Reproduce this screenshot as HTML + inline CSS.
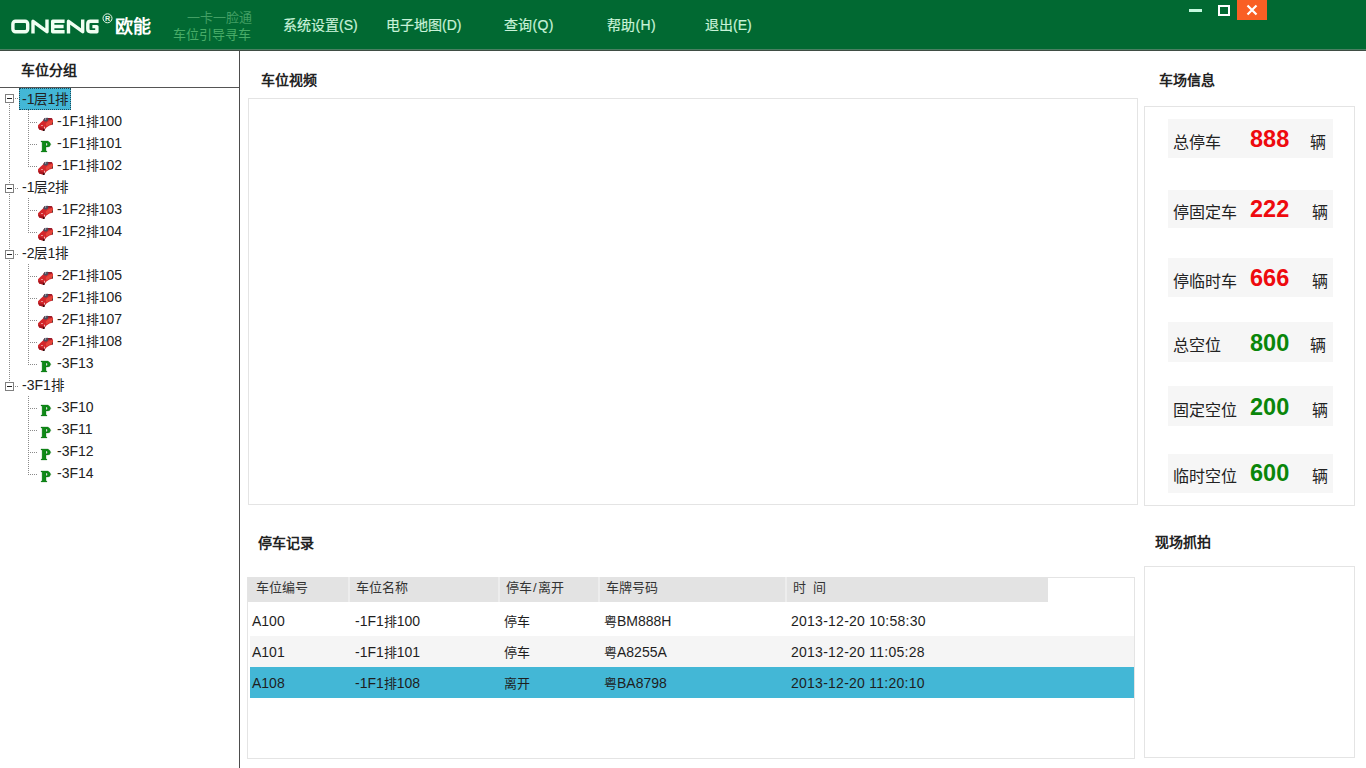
<!DOCTYPE html>
<html lang="zh-CN">
<head>
<meta charset="utf-8">
<title>ONENG</title>
<style>
*{box-sizing:border-box;margin:0;padding:0}
html,body{width:1366px;height:768px;overflow:hidden;background:#fff}
body{position:relative;font-family:"Liberation Sans",sans-serif;color:#1e1e1e;font-size:14px}
i{display:block;position:absolute;font-style:normal}
.abs{position:absolute}
/* top bar */
#bar{position:absolute;left:0;top:0;width:1366px;height:49px;background:#016932}
#barl1{position:absolute;left:0;top:49px;width:1366px;height:1px;background:#4a8062}
#barl2{position:absolute;left:0;top:50px;width:1366px;height:1px;background:#3f4d44}
.menu{position:absolute;top:15px;height:20px;line-height:20px;font-size:14px;color:#c8f2d8;white-space:nowrap;-webkit-text-stroke:.2px #c8f2d8}
.slog{position:absolute;font-size:13px;line-height:15px;color:#4aa56c;white-space:nowrap}
/* left */
#lborder{position:absolute;left:239px;top:51px;width:1px;height:717px;background:#4d4d4d}
#lhl{position:absolute;left:0;top:87px;width:239px;height:1px;background:#555}
.h{position:absolute;font-size:14px;font-weight:bold;line-height:18px;color:#222;white-space:nowrap}
.tl{position:absolute;height:22px;line-height:23px;font-size:14px;color:#222;white-space:nowrap}
.tl.sel{background:#43b7d6;padding:0 0 0 3px;width:52px;outline:1px dotted #1c4a5a;outline-offset:-1px}
.vd{width:1px;background:repeating-linear-gradient(to bottom,#8a8a8a 0 1px,transparent 1px 2px)}
.hd{height:1px;background:repeating-linear-gradient(to right,#8a8a8a 0 1px,transparent 1px 2px)}
.bx{left:5px;width:9px;height:9px;border:1px solid #808080;background:#fff}
.bx:after{content:"";position:absolute;left:1px;top:3px;width:5px;height:1px;background:#222}
.car{position:absolute;left:37px}
.pk{position:absolute;left:40px}
/* boxes */
.box{position:absolute;border:1px solid #e4e4e4;background:#fff}
.ir{position:absolute;left:1168px;width:165px;background:#f6f6f6}
.ir span{position:absolute;white-space:nowrap}
.il{left:4.5px;top:12.5px;font-size:16px;line-height:22px;color:#222}
.in{left:82px;top:5.5px;font-size:23.5px;line-height:28px;font-weight:bold}
.iu{left:142px;top:13px;font-size:16px;line-height:22px;color:#222}
.r{color:#ee0a0e}.g{color:#0a860a}
/* table */
#th{position:absolute;left:248px;top:577px;width:800px;height:25px;background:#e3e3e3}
#th span{position:absolute;top:0;height:25px;line-height:22px;font-size:13px;color:#333;white-space:nowrap}
#th i{top:0;width:2px;height:25px;background:#ededed}
.tr{position:absolute;left:250px;width:884px;height:31px}
.tr span{position:absolute;top:0;height:31px;line-height:33px;font-size:14px;color:#1e1e1e;white-space:nowrap;margin-left:-250px}
b.c{font-weight:normal;font-size:13px}
b.c2{font-weight:normal;font-size:13.5px}
.tr span.tm{letter-spacing:.25px}
.r2{background:#f5f5f5}.r3{background:#43b7d6}
</style>
</head>
<body>
<svg width="0" height="0" style="position:absolute">
<defs>
<g id="car">
<path d="M1 9.2 L3.5 6.7 L6 4.5 L7.5 2 L10.5 1.9 L14.9 2.2 L16.05 4.5 L15.9 8.4 L12.5 9.6 L9.4 11.6 L7.9 13.6 L7 14.9 L5.8 14.4 L2.1 13.4 L1.1 11Z" fill="#d3272b"/>
<path d="M11 2 L14.9 2.2 L15.6 3.4 L12.2 3.6 L10.6 3Z" fill="#8c1324"/>
<path d="M6.2 4.3 L7.5 1.9 L10.8 1.8 L11.5 3.4 L10.1 5.6 L7.4 5.4Z" fill="#4b4d5c"/>
<path d="M7.8 2.6 L9 2.2 L9.2 3.4 L8.2 3.8Z" fill="#b9bcc9"/>
<path d="M10.5 5.8 L15.4 3.8 L15.6 7.6 L12.4 8.8 L9.6 10.6 L8.6 8Z" fill="#e5463a"/>
<path d="M1.2 10.4 L4 11.6 L6.8 12 L7.4 13.8 L5.8 14.4 L2.1 13.4 L1.1 11Z" fill="#a8161f"/>
<path d="M4.2 8.9 L5.8 8.9 L5.8 9.7 L4.2 9.7Z" fill="#f4d9d6"/>
<path d="M7.1 10.8 L7.9 10.8 L7.9 12.6 L7.1 12.6Z" fill="#f2e4e0"/>
<path d="M6 13.4 L7.9 13.4 L7.4 14.9 L6.2 14.9Z" fill="#120a0a"/>
<path d="M15.3 6.4 L16 6.6 L15.9 8.4 L15 8.6Z" fill="#3a3d33"/>
</g>
<g id="pk">
<path fill-rule="evenodd" d="M1 1 H8 L9.6 2.2 L10.8 4.35 L9.6 6.5 L8 6.9 H6 V11.1 H6.9 V11.9 H1.1 V11.1 H2.1 V1.9 H1 Z M6 2.9 H7 Q7.7 4.4 7 5.8 H6 Z" fill="#0f8a17" stroke="#0a6410" stroke-width="0.3" stroke-linejoin="round"/>
</g>
</defs>
</svg>

<div id="bar"></div><div id="barl1"></div><div id="barl2"></div>

<!-- logo -->
<svg class="abs" style="left:0;top:0" width="160" height="48" viewBox="0 0 160 48">
<g fill="none" stroke="#f0fff2" stroke-width="3.4" stroke-linejoin="round" stroke-linecap="butt">
<rect x="12.9" y="21.3" width="14.8" height="10.4" rx="2.6"/>
<path d="M33 33.4 V21.3 L47 31.7 V19.6"/>
<path d="M64.6 21.3 H52.7 V31.7 H64.6 M52.7 26.5 H63.6"/>
<path d="M68.5 33.4 V21.3 L82.7 31.7 V19.6"/>
<path d="M98.6 21.3 H90.4 Q87.8 21.3 87.8 23.9 V29.1 Q87.8 31.7 90.4 31.7 H96.9 V26.6 H92.4"/>
</g>
<circle cx="107.5" cy="18.3" r="4.5" fill="none" stroke="#e6f8ea" stroke-width="1"/>
<text x="105.1" y="20.9" font-family="Liberation Sans, sans-serif" font-size="7.2" font-weight="bold" fill="#e6f8ea">R</text>
</svg>
<div class="abs" style="left:115px;top:16px;font-size:18px;line-height:22px;font-weight:bold;color:#fff;white-space:nowrap">欧能</div>
<div class="slog" style="left:187px;top:10px;color:#429f64">一卡一脸通</div>
<div class="slog" style="left:173px;top:27px;color:#48ac68">车位引导寻车</div>

<div class="menu" style="left:283px">系统设置(S)</div>
<div class="menu" style="left:386px">电子地图(D)</div>
<div class="menu" style="left:504px;letter-spacing:.3px">查询(Q)</div>
<div class="menu" style="left:607px;letter-spacing:.3px">帮助(H)</div>
<div class="menu" style="left:705px">退出(E)</div>

<!-- window controls -->
<i style="left:1189px;top:9.2px;width:12.6px;height:2.6px;background:#c4f8de"></i>
<i style="left:1218px;top:5px;width:12px;height:11px;border:2px solid #fff"></i>
<i style="left:1237px;top:0;width:30px;height:20px;background:#f95f24"></i>
<svg class="abs" style="left:1246px;top:4px" width="12" height="12" viewBox="0 0 12 12"><path d="M1.5 1.5 L10.5 10.5 M10.5 1.5 L1.5 10.5" stroke="#fff" stroke-width="2.2" fill="none"/></svg>

<!-- left panel -->
<div id="lborder"></div><div id="lhl"></div>
<div class="h" style="left:21px;top:61px">车位分组</div>
<i class="vd" style="left:9px;top:104px;height:278px"></i>
<i class="bx" style="top:94px"></i>
<i class="hd" style="left:15px;top:98px;width:4px"></i>
<span class="tl sel" style="left:19px;top:88px">-1<b class="c2">层</b>1<b class="c2">排</b></span>
<i class="vd" style="left:28px;top:110px;height:57px"></i>
<i class="hd" style="left:30px;top:122px;width:8px"></i>
<svg class="car" style="top:116px" width="18" height="16" viewBox="0 0 18 16"><use href="#car"/></svg>
<span class="tl" style="left:57px;top:110px">-1F1<b class="c">排</b>100</span>
<i class="hd" style="left:30px;top:144px;width:8px"></i>
<svg class="pk" style="top:140px" width="12" height="13" viewBox="0 0 12 13"><use href="#pk"/></svg>
<span class="tl" style="left:57px;top:132px">-1F1<b class="c">排</b>101</span>
<i class="hd" style="left:30px;top:166px;width:8px"></i>
<svg class="car" style="top:160px" width="18" height="16" viewBox="0 0 18 16"><use href="#car"/></svg>
<span class="tl" style="left:57px;top:154px">-1F1<b class="c">排</b>102</span>
<i class="bx" style="top:184px"></i>
<i class="hd" style="left:15px;top:188px;width:4px"></i>
<span class="tl" style="left:22px;top:176px">-1<b class="c2">层</b>2<b class="c2">排</b></span>
<i class="vd" style="left:28px;top:198px;height:35px"></i>
<i class="hd" style="left:30px;top:210px;width:8px"></i>
<svg class="car" style="top:204px" width="18" height="16" viewBox="0 0 18 16"><use href="#car"/></svg>
<span class="tl" style="left:57px;top:198px">-1F2<b class="c">排</b>103</span>
<i class="hd" style="left:30px;top:232px;width:8px"></i>
<svg class="car" style="top:226px" width="18" height="16" viewBox="0 0 18 16"><use href="#car"/></svg>
<span class="tl" style="left:57px;top:220px">-1F2<b class="c">排</b>104</span>
<i class="bx" style="top:250px"></i>
<i class="hd" style="left:15px;top:254px;width:4px"></i>
<span class="tl" style="left:22px;top:242px">-2<b class="c2">层</b>1<b class="c2">排</b></span>
<i class="vd" style="left:28px;top:264px;height:101px"></i>
<i class="hd" style="left:30px;top:276px;width:8px"></i>
<svg class="car" style="top:270px" width="18" height="16" viewBox="0 0 18 16"><use href="#car"/></svg>
<span class="tl" style="left:57px;top:264px">-2F1<b class="c">排</b>105</span>
<i class="hd" style="left:30px;top:298px;width:8px"></i>
<svg class="car" style="top:292px" width="18" height="16" viewBox="0 0 18 16"><use href="#car"/></svg>
<span class="tl" style="left:57px;top:286px">-2F1<b class="c">排</b>106</span>
<i class="hd" style="left:30px;top:320px;width:8px"></i>
<svg class="car" style="top:314px" width="18" height="16" viewBox="0 0 18 16"><use href="#car"/></svg>
<span class="tl" style="left:57px;top:308px">-2F1<b class="c">排</b>107</span>
<i class="hd" style="left:30px;top:342px;width:8px"></i>
<svg class="car" style="top:336px" width="18" height="16" viewBox="0 0 18 16"><use href="#car"/></svg>
<span class="tl" style="left:57px;top:330px">-2F1<b class="c">排</b>108</span>
<i class="hd" style="left:30px;top:364px;width:8px"></i>
<svg class="pk" style="top:360px" width="12" height="13" viewBox="0 0 12 13"><use href="#pk"/></svg>
<span class="tl" style="left:57px;top:352px">-3F13</span>
<i class="bx" style="top:382px"></i>
<i class="hd" style="left:15px;top:386px;width:4px"></i>
<span class="tl" style="left:22px;top:374px">-3F1<b class="c2">排</b></span>
<i class="vd" style="left:28px;top:396px;height:79px"></i>
<i class="hd" style="left:30px;top:408px;width:8px"></i>
<svg class="pk" style="top:404px" width="12" height="13" viewBox="0 0 12 13"><use href="#pk"/></svg>
<span class="tl" style="left:57px;top:396px">-3F10</span>
<i class="hd" style="left:30px;top:430px;width:8px"></i>
<svg class="pk" style="top:426px" width="12" height="13" viewBox="0 0 12 13"><use href="#pk"/></svg>
<span class="tl" style="left:57px;top:418px">-3F11</span>
<i class="hd" style="left:30px;top:452px;width:8px"></i>
<svg class="pk" style="top:448px" width="12" height="13" viewBox="0 0 12 13"><use href="#pk"/></svg>
<span class="tl" style="left:57px;top:440px">-3F12</span>
<i class="hd" style="left:30px;top:474px;width:8px"></i>
<svg class="pk" style="top:470px" width="12" height="13" viewBox="0 0 12 13"><use href="#pk"/></svg>
<span class="tl" style="left:57px;top:462px">-3F14</span>

<!-- main -->
<div class="h" style="left:261px;top:71px">车位视频</div>
<div class="box" style="left:248px;top:98px;width:890px;height:407px"></div>
<div class="h" style="left:1159px;top:71px">车场信息</div>
<div class="box" style="left:1144px;top:106px;width:211px;height:400px"></div>
<div class="ir" style="top:119px;height:39px"><span class="il" style="top:12.5px">总停车</span><span class="in r" style="top:5.5px">888</span><span class="iu" style="left:142px;top:13px">辆</span></div>
<div class="ir" style="top:190px;height:38px"><span class="il" style="top:11.5px">停固定车</span><span class="in r" style="top:4.5px">222</span><span class="iu" style="left:143.5px;top:12px">辆</span></div>
<div class="ir" style="top:258px;height:39px"><span class="il" style="top:12.5px">停临时车</span><span class="in r" style="top:5.5px">666</span><span class="iu" style="left:143.5px;top:13px">辆</span></div>
<div class="ir" style="top:322px;height:40px"><span class="il" style="top:12.5px">总空位</span><span class="in g" style="top:6.5px">800</span><span class="iu" style="left:142px;top:13px">辆</span></div>
<div class="ir" style="top:386px;height:40px"><span class="il" style="top:13.5px">固定空位</span><span class="in g" style="top:6.5px">200</span><span class="iu" style="left:143.5px;top:14px">辆</span></div>
<div class="ir" style="top:454px;height:39px"><span class="il" style="top:11.5px">临时空位</span><span class="in g" style="top:4.5px">600</span><span class="iu" style="left:143.5px;top:12px">辆</span></div>

<div class="h" style="left:258px;top:533.5px">停车记录</div>
<div class="box" style="left:247px;top:577px;width:888px;height:182px"></div>
<div id="th">
<span style="left:8px">车位编号</span><i style="left:100px"></i>
<span style="left:108px">车位名称</span><i style="left:250px"></i>
<span style="left:258px">停车<b style="font-weight:normal;padding:0 1px">/</b>离开</span><i style="left:350px"></i>
<span style="left:358px">车牌号码</span><i style="left:537px"></i>
<span style="left:545px">时&nbsp;&nbsp;间</span>
</div>
<div class="tr r1" style="top:605px"><span style="left:252px">A100</span><span style="left:355px">-1F1<b class="c">排</b>100</span><span style="left:504px"><b class="c">停车</b></span><span style="left:604px"><b class="c">粤</b>BM888H</span><span class="tm" style="left:791px">2013-12-20 10:58:30</span></div>
<div class="tr r2" style="top:636px"><span style="left:252px">A101</span><span style="left:355px">-1F1<b class="c">排</b>101</span><span style="left:504px"><b class="c">停车</b></span><span style="left:604px"><b class="c">粤</b>A8255A</span><span class="tm" style="left:791px">2013-12-20 11:05:28</span></div>
<div class="tr r3" style="top:667px"><span style="left:252px">A108</span><span style="left:355px">-1F1<b class="c">排</b>108</span><span style="left:504px"><b class="c">离开</b></span><span style="left:604px"><b class="c">粤</b>BA8798</span><span class="tm" style="left:791px">2013-12-20 11:20:10</span></div>
<div class="h" style="left:1155px;top:533px">现场抓拍</div>
<div class="box" style="left:1144px;top:566px;width:211px;height:192px"></div>
</body>
</html>
